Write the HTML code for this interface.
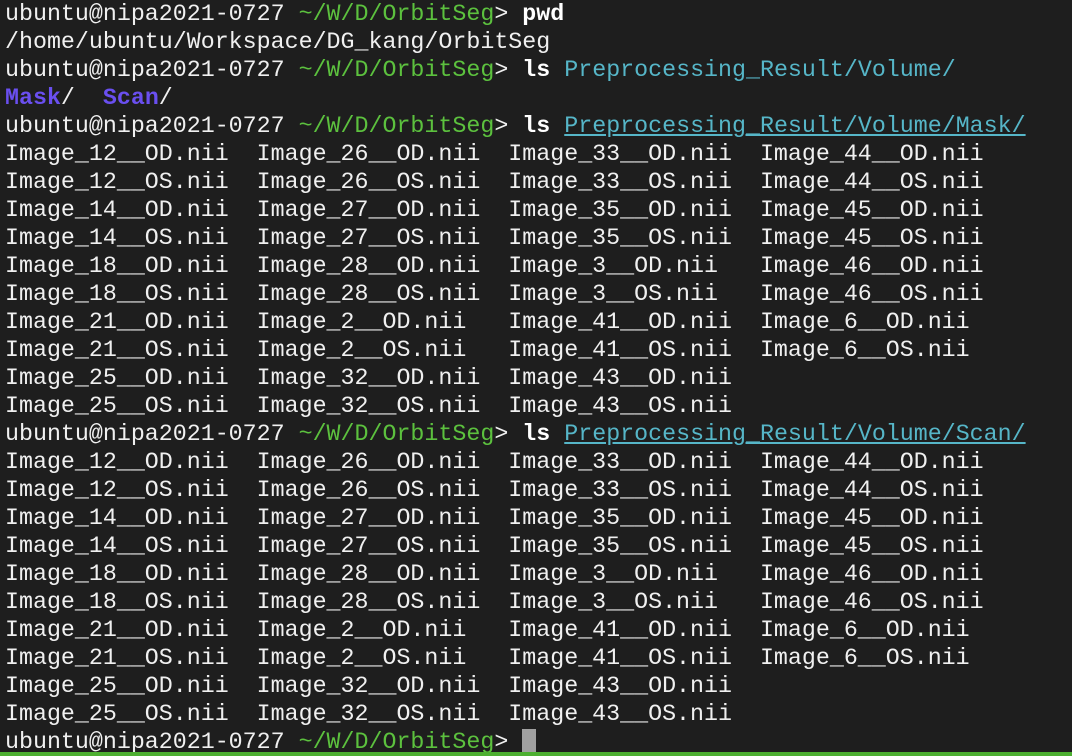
<!DOCTYPE html>
<html><head><meta charset="utf-8"><style>
html,body{margin:0;padding:0;background:#1e1e1e;width:1072px;height:756px;overflow:hidden;}
pre{margin:0;padding:0 0 0 5px;font-family:"Liberation Mono",monospace;font-size:23.3px;line-height:28px;color:#f0f0f0;letter-spacing:0;}
.g{color:#5cc13e}.b{font-weight:bold;color:#fff}.c{color:#56b6c8}.u{color:#56b6c8;text-decoration:underline}.p{color:#6a4ff0;font-weight:bold}
.cur{display:inline-block;width:14px;height:25px;background:#a0a0a0;vertical-align:-6px}
.bar{position:absolute;left:0;top:752px;width:1072px;height:4px;background:#4caf30}
</style></head><body>
<pre>ubuntu@nipa2021-0727 <span class="g">~/W/D/OrbitSeg</span>&gt; <span class="b">pwd</span>
/home/ubuntu/Workspace/DG_kang/OrbitSeg
ubuntu@nipa2021-0727 <span class="g">~/W/D/OrbitSeg</span>&gt; <span class="b">ls</span> <span class="c">Preprocessing_Result/Volume/</span>
<span class="p">Mask</span>/  <span class="p">Scan</span>/
ubuntu@nipa2021-0727 <span class="g">~/W/D/OrbitSeg</span>&gt; <span class="b">ls</span> <span class="u">Preprocessing_Result/Volume/Mask/</span>
Image_12__OD.nii  Image_26__OD.nii  Image_33__OD.nii  Image_44__OD.nii
Image_12__OS.nii  Image_26__OS.nii  Image_33__OS.nii  Image_44__OS.nii
Image_14__OD.nii  Image_27__OD.nii  Image_35__OD.nii  Image_45__OD.nii
Image_14__OS.nii  Image_27__OS.nii  Image_35__OS.nii  Image_45__OS.nii
Image_18__OD.nii  Image_28__OD.nii  Image_3__OD.nii   Image_46__OD.nii
Image_18__OS.nii  Image_28__OS.nii  Image_3__OS.nii   Image_46__OS.nii
Image_21__OD.nii  Image_2__OD.nii   Image_41__OD.nii  Image_6__OD.nii
Image_21__OS.nii  Image_2__OS.nii   Image_41__OS.nii  Image_6__OS.nii
Image_25__OD.nii  Image_32__OD.nii  Image_43__OD.nii
Image_25__OS.nii  Image_32__OS.nii  Image_43__OS.nii
ubuntu@nipa2021-0727 <span class="g">~/W/D/OrbitSeg</span>&gt; <span class="b">ls</span> <span class="u">Preprocessing_Result/Volume/Scan/</span>
Image_12__OD.nii  Image_26__OD.nii  Image_33__OD.nii  Image_44__OD.nii
Image_12__OS.nii  Image_26__OS.nii  Image_33__OS.nii  Image_44__OS.nii
Image_14__OD.nii  Image_27__OD.nii  Image_35__OD.nii  Image_45__OD.nii
Image_14__OS.nii  Image_27__OS.nii  Image_35__OS.nii  Image_45__OS.nii
Image_18__OD.nii  Image_28__OD.nii  Image_3__OD.nii   Image_46__OD.nii
Image_18__OS.nii  Image_28__OS.nii  Image_3__OS.nii   Image_46__OS.nii
Image_21__OD.nii  Image_2__OD.nii   Image_41__OD.nii  Image_6__OD.nii
Image_21__OS.nii  Image_2__OS.nii   Image_41__OS.nii  Image_6__OS.nii
Image_25__OD.nii  Image_32__OD.nii  Image_43__OD.nii
Image_25__OS.nii  Image_32__OS.nii  Image_43__OS.nii
ubuntu@nipa2021-0727 <span class="g">~/W/D/OrbitSeg</span>&gt; <span class="cur"></span></pre>
<div class="bar"></div>
</body></html>
